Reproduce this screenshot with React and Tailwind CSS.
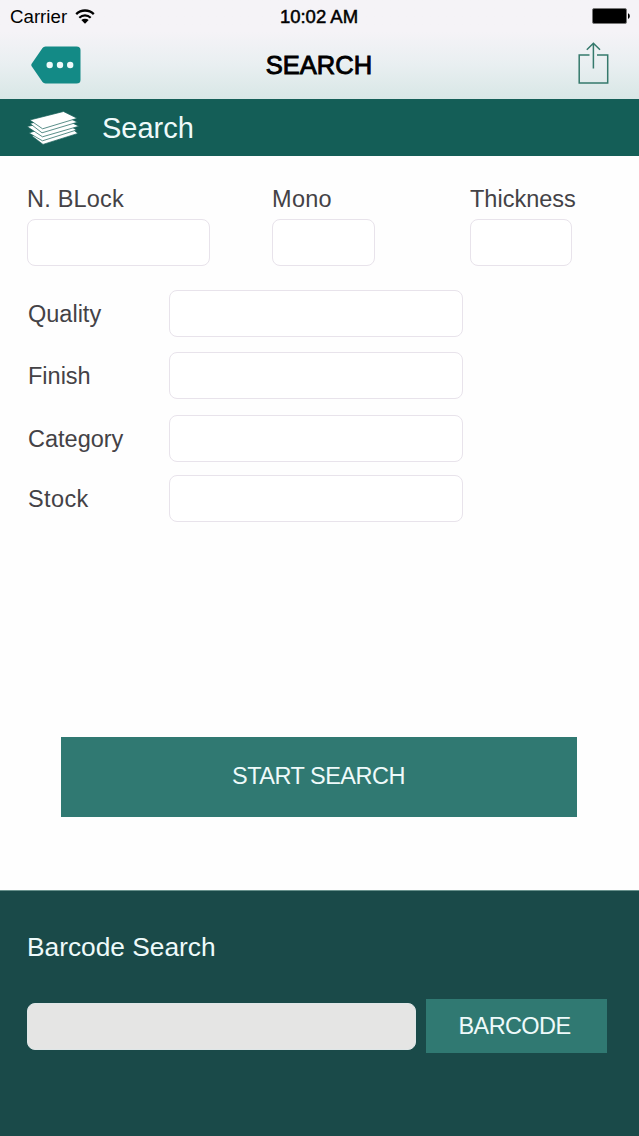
import { useState } from "react";
import clsx from "clsx";

const topFields = [
  { id: "block", label: "N. BLock", column: "w-[245px]", input: "w-[183px]", tracking: "tracking-[0.2px]" },
  { id: "mono", label: "Mono", column: "w-[198px]", input: "w-[103px]", tracking: "tracking-[0.3px]" },
  { id: "thickness", label: "Thickness", column: "w-[110px]", input: "w-[102px]", tracking: "tracking-normal" },
];

const rowFields = [
  { id: "quality", label: "Quality", gap: "mt-6" },
  { id: "finish", label: "Finish", gap: "mt-[15px]" },
  { id: "category", label: "Category", gap: "mt-4" },
  { id: "stock", label: "Stock", gap: "mt-[13px]", tracking: "tracking-[0.4px]" },
];

function WifiIcon() {
  return (
    <svg viewBox="0 0 20 15" className="-mt-px h-[15px] w-5" fill="none" aria-hidden="true">
      <path d="M1.2 5.1a12.6 12.6 0 0 1 17.6 0" stroke="#000" strokeWidth="2.3" />
      <path d="M4.3 8.7a8.3 8.3 0 0 1 11.4 0" stroke="#000" strokeWidth="2.2" />
      <path d="M6.3 11.1a5.4 5.4 0 0 1 7.4 0L10 14.8Z" fill="#000" />
    </svg>
  );
}

function BatteryIcon() {
  return (
    <svg viewBox="0 0 38 16" className="-mt-[2px] h-4 w-[38px]" aria-hidden="true">
      <rect x="0.5" y="0.5" width="34" height="15" rx="1.5" fill="#000" stroke="#777" />
      <path d="M36 5.2c2.4.6 2.4 5 0 5.6Z" fill="#000" />
    </svg>
  );
}

function BackTagIcon() {
  return (
    <svg viewBox="0 0 50 38" className="h-[38px] w-[50px]" aria-hidden="true">
      <path
        d="M14.5 .5H45.5Q49.5 .5 49.5 4V34Q49.5 37.5 45.5 37.5H14.5Q12.5 37.5 11.3 35.8L.5 20Q0 19 .5 18L11.3 2.2Q12.5 .5 14.5 .5Z"
        fill="#138a86"
      />
      <circle cx="18.7" cy="19" r="3.2" fill="#eefafa" />
      <circle cx="29" cy="19" r="3.2" fill="#eefafa" />
      <circle cx="39.2" cy="19" r="3.2" fill="#eefafa" />
    </svg>
  );
}

function ShareIcon() {
  return (
    <svg
      viewBox="0 0 31 42"
      className="h-[42px] w-[31px]"
      fill="none"
      stroke="#35796c"
      strokeWidth="1.5"
      aria-hidden="true"
    >
      <path d="M11.5 13H1.2V41H29.7V13H19" />
      <path d="M15.4 26.5V1.2M8.8 7.8L15.4 1.2L22 7.8" />
    </svg>
  );
}

// Pile of stone slabs, drawn from the bottom sheet up
function SlabsIcon() {
  return (
    <svg viewBox="0 0 52 34" className="h-[34px] w-[52px]" aria-hidden="true">
      <g fill="#fff" stroke="#145e57" strokeWidth="0.7" strokeLinejoin="round">
        <path d="M5 25L16 33.4L51 22.4L38 12Z" />
        <path d="M2 22L15.5 29.8L49.5 19L36 10Z" />
        <path d="M0 15.5L15.5 25.8L52 15.2L37 8Z" />
        <path d="M3 12.5L15 21.8L50.5 11.2L36 4Z" />
        <path d="M2.8 9L15.6 17.8L50.2 7.3L36.5.5Z" />
      </g>
    </svg>
  );
}

function TextBox({ id, value, onChange, className }) {
  return (
    <input
      id={id}
      type="text"
      value={value}
      onChange={(e) => onChange(id, e.target.value)}
      className={clsx(
        "block h-[47px] rounded-[8px] border border-[#e8e3eb] bg-white px-3 text-[23px] text-[#444246] outline-none",
        className
      )}
    />
  );
}

export default function App() {
  const [values, setValues] = useState({});

  const handleChange = (id, value) => setValues((prev) => ({ ...prev, [id]: value }));

  return (
    <div className="flex h-[1136px] w-[639px] flex-col overflow-hidden bg-[#fefefe] font-['Liberation_Sans',Arial,sans-serif]">
      <header className="h-[99px] shrink-0 bg-linear-to-b from-[#f5f3f7] from-32% via-[#e9eff1] via-65% to-[#d8e7e6]">
        <div className="grid h-8 grid-cols-3 items-center pr-[9px] pl-[10px] text-black">
          <div className="flex items-center gap-2">
            <span className="pt-px text-[18.7px] leading-8">Carrier</span>
            <WifiIcon />
          </div>
          <span className="pt-px pr-[2px] text-center text-[18.5px] leading-8 [-webkit-text-stroke:0.5px_#000]">
            10:02 AM
          </span>
          <div className="flex justify-end">
            <BatteryIcon />
          </div>
        </div>
        <div className="grid h-[66px] grid-cols-3 items-center pr-[30px] pl-[31px]">
          <button type="button" aria-label="Back" className="justify-self-start">
            <BackTagIcon />
          </button>
          <h1 className="pr-[2px] text-center text-[25.5px] whitespace-nowrap text-black [-webkit-text-stroke:0.9px_#000]">
            SEARCH
          </h1>
          <button type="button" aria-label="Share" className="-mt-[5px] justify-self-end">
            <ShareIcon />
          </button>
        </div>
      </header>

      <div className="flex h-[57px] shrink-0 items-center gap-[23px] bg-[#145e57] pl-[27px]">
        <SlabsIcon />
        <h2 className="pt-px text-[29px] leading-none text-[#eefafa]">Search</h2>
      </div>

      <main className="flex grow flex-col text-[23.5px] leading-6 text-[#444246]">
        <div className="mt-[31px] flex pl-[27px]">
          {topFields.map((field) => (
            <div key={field.id} className={field.column}>
              <label htmlFor={field.id} className={clsx("mb-2 block whitespace-nowrap", field.tracking)}>
                {field.label}
              </label>
              <TextBox
                id={field.id}
                value={values[field.id] ?? ""}
                onChange={handleChange}
                className={field.input}
              />
            </div>
          ))}
        </div>

        {rowFields.map((field) => (
          <div key={field.id} className={clsx("flex items-center pl-7", field.gap)}>
            <label htmlFor={field.id} className={clsx("w-[141px]", field.tracking)}>
              {field.label}
            </label>
            <TextBox
              id={field.id}
              value={values[field.id] ?? ""}
              onChange={handleChange}
              className="w-[294px]"
            />
          </div>
        ))}

        <button
          type="button"
          className="mt-auto mb-[73px] ml-[61px] h-20 w-[516px] bg-[#307972] pr-px pb-[3px] text-[23.5px] tracking-[-0.5px] text-[#eefafa]"
        >
          START SEARCH
        </button>
      </main>

      <footer className="h-[246px] shrink-0 border-t border-[#68918c] bg-[#1a4a49] pl-[27px]">
        <h3 className="mt-[41px] text-[26.3px] leading-[30px] text-[#eefafa]">Barcode Search</h3>
        <div className="mt-[37px] flex items-center gap-[10px]">
          <input
            type="text"
            aria-label="Barcode"
            value={values.barcode ?? ""}
            onChange={(e) => handleChange("barcode", e.target.value)}
            className="h-[47px] w-[389px] rounded-[8px] border border-[#dfe6e7] bg-[#e5e5e4] px-3 text-[23px] outline-none"
          />
          <button
            type="button"
            className="h-[54px] w-[181px] bg-[#307972] pt-px pr-1 text-[23.5px] tracking-[-0.6px] text-[#eefafa]"
          >
            BARCODE
          </button>
        </div>
      </footer>
    </div>
  );
}
